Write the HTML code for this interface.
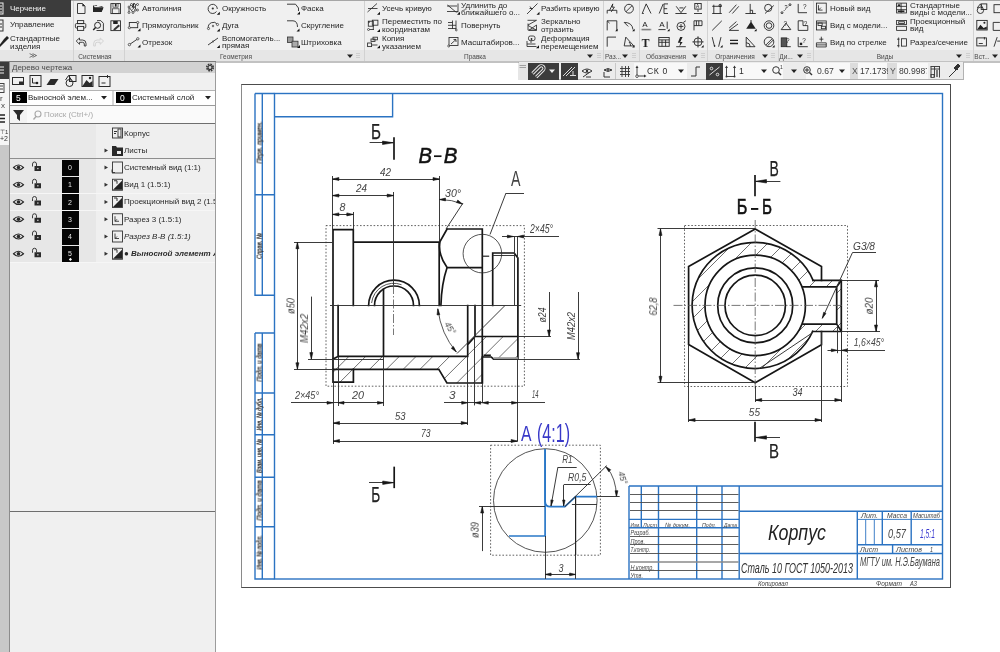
<!DOCTYPE html>
<html><head><meta charset="utf-8">
<style>
*{box-sizing:border-box}
html,body{margin:0;padding:0;width:1000px;height:652px;overflow:hidden;background:#fff;font-family:"Liberation Sans",sans-serif;color:#222}
.t,.lb,svg text{will-change:transform}
.a{position:absolute}
.t{position:absolute;white-space:nowrap;font-size:8px;line-height:8px;color:#262626}
.lb{position:absolute;white-space:nowrap;font-size:6.5px;line-height:7px;color:#4a4a4a}
svg{overflow:visible}
</style></head><body>
<!-- drawing area -->
<div class="a" style="left:216px;top:62px;width:784px;height:590px;background:#fff"></div>
<div class="a" style="left:240.5px;top:83.5px;width:710.5px;height:504.5px;border:1.3px solid #4c4c4c;border-left-color:#8a8a8a;background:#fff"></div>
<svg class="a" style="left:0;top:0" width="1000" height="652" viewBox="0 0 1000 652">
<g fill="none" stroke="#2b73c2" stroke-width="1.4">
<rect x="274.5" y="93.5" width="668" height="485.5"/>
<path d="M255 93.5V295.2H274.5M262.3 93.5V295.2M255 93.5H274.5M255 194.7H274.5"/>
<path d="M255 333V579H274.5M262.3 333V579M255 333H274.5M255 393H274.5M255 434.7H274.5M255 477.2H274.5M255 526.8H274.5"/>
<path d="M274.5 116.7H392.6V93.5"/>
</g>
<rect x="326" y="225.6" width="198.4" height="160.6" stroke="#3a3a3a" stroke-width="0.8" fill="none" stroke-dasharray="1.6 1.8"/>
<clipPath id="h1"><path d="M333 359.1L338.5 356.3H467.7V344.6L475 336.5H517.9V359.2H493.5L491.3 357H482.3V383H446.9L438.8 369.3H353.4V382.2H333Z"/></clipPath>
<path d="M281.7 390L371.7 300M298.5 390L388.5 300M315.3 390L405.3 300M332.1 390L422.1 300M348.9 390L438.9 300M365.7 390L455.7 300M382.5 390L472.5 300M399.3 390L489.3 300M416.1 390L506.1 300M432.9 390L522.9 300M449.7 390L539.7 300M466.5 390L556.5 300M483.3 390L573.3 300M500.1 390L590.1 300" stroke="#333" stroke-width="0.7" clip-path="url(#h1)"/>
<path d="M333 229.7H353.3V242.2H439.2V305.5 M353.3 229.7V305.5 M333 229.7V382.2H353.4V369.3H438.8L446.9 383H482.3V357H491.3L493.5 359.2H517.9V258L514.2 253H492.7V305.5" stroke="#161616" stroke-width="1.7" fill="none" stroke-linecap="square" />
<path d="M338.1 305.5V356.3H467.7V344.6L475 336.5H517.9 M333 359.1L338.5 356.3 M383.5 289.5V356.3 M467.7 305.5V356.3 M475 305.5V336.5 M333 369.3H353.4" stroke="#161616" stroke-width="1.7" fill="none" stroke-linecap="square" />
<path d="M447.1 229H482.3V383 M447.1 267.6H482.3 M447.1 229L440 241.5Q437.5 254 447.1 267.6 M447.1 267.6Q441.5 284 440.9 305.5" stroke="#161616" stroke-width="1.7" fill="none" stroke-linecap="square" />
<path d="M368.6 305.5A25.4 25.4 0 0 1 419.4 305.5 M374.5 305.5A19.5 19.5 0 0 1 413.5 305.5" stroke="#161616" stroke-width="1.7" fill="none" stroke-linecap="square" />
<path d="M371.6 303A22.2 22.2 0 0 1 401.5 284.7" stroke="#2a2a2a" stroke-width="0.8" fill="none" />
<line x1="330" y1="305.5" x2="521.2" y2="305.5" stroke="#303030" stroke-width="0.95" fill="none"/>
<line x1="294" y1="242.5" x2="333" y2="242.5" stroke="#303030" stroke-width="0.95" fill="none"/>
<line x1="308" y1="359.5" x2="383.5" y2="359.5" stroke="#303030" stroke-width="0.95" fill="none"/>
<line x1="457" y1="353.5" x2="505" y2="305.5" stroke="#303030" stroke-width="0.95" fill="none"/>
<line x1="294" y1="369.5" x2="333" y2="369.5" stroke="#303030" stroke-width="0.95" fill="none"/>
<line x1="439.5" y1="176" x2="439.5" y2="241.5" stroke="#303030" stroke-width="0.95" fill="none"/>
<line x1="332.5" y1="176" x2="332.5" y2="229.7" stroke="#303030" stroke-width="0.95" fill="none"/>
<line x1="393.5" y1="192" x2="393.5" y2="285" stroke="#303030" stroke-width="0.95" fill="none"/>
<line x1="353.5" y1="212" x2="353.5" y2="229.7" stroke="#303030" stroke-width="0.95" fill="none"/>
<line x1="393.5" y1="285" x2="393.5" y2="335" stroke="#555" stroke-width="0.8" fill="none" stroke-dasharray="9 2 1.5 2"/>
<line x1="492.7" y1="255.5" x2="514.2" y2="255.5" stroke="#303030" stroke-width="0.95" fill="none"/>
<line x1="514.5" y1="236" x2="514.5" y2="305.5" stroke="#303030" stroke-width="0.95" fill="none"/>
<line x1="517.5" y1="236" x2="517.5" y2="258" stroke="#303030" stroke-width="0.95" fill="none"/>
<rect x="493.5" y="357.2" width="24.4" height="2" fill="#999"/>
<line x1="484.5" y1="355.3" x2="490" y2="355.3" stroke="#161616" stroke-width="1.7" fill="none" stroke-linecap="square"/>
<line x1="482.3" y1="256.2" x2="489.2" y2="256.2" stroke="#222" stroke-width="1.2"/>
<line x1="332.4" y1="179.5" x2="439.5" y2="179.5" stroke="#303030" stroke-width="0.95" fill="none"/>
<polygon points="332.40,179.00 338.90,177.50 338.90,180.50" fill="#161616" stroke="#161616" stroke-width="0.6" stroke-linejoin="round"/>
<polygon points="439.50,179.00 433.00,180.50 433.00,177.50" fill="#161616" stroke="#161616" stroke-width="0.6" stroke-linejoin="round"/>
<text x="380" y="176" font-family="Liberation Sans" font-size="11.11" font-style="italic" font-weight="normal" fill="#444" textLength="11" lengthAdjust="spacingAndGlyphs">42</text>
<line x1="332.4" y1="195.5" x2="393.7" y2="195.5" stroke="#303030" stroke-width="0.95" fill="none"/>
<polygon points="332.40,195.60 338.90,194.10 338.90,197.10" fill="#161616" stroke="#161616" stroke-width="0.6" stroke-linejoin="round"/>
<polygon points="393.70,195.60 387.20,197.10 387.20,194.10" fill="#161616" stroke="#161616" stroke-width="0.6" stroke-linejoin="round"/>
<text x="356" y="192" font-family="Liberation Sans" font-size="11.11" font-style="italic" font-weight="normal" fill="#444" textLength="11" lengthAdjust="spacingAndGlyphs">24</text>
<line x1="332.4" y1="214.5" x2="353.3" y2="214.5" stroke="#303030" stroke-width="0.95" fill="none"/>
<polygon points="332.40,214.40 338.90,212.90 338.90,215.90" fill="#161616" stroke="#161616" stroke-width="0.6" stroke-linejoin="round"/>
<polygon points="353.30,214.40 346.80,215.90 346.80,212.90" fill="#161616" stroke="#161616" stroke-width="0.6" stroke-linejoin="round"/>
<text x="339.6" y="211" font-family="Liberation Sans" font-size="11.11" font-style="italic" font-weight="normal" fill="#444" textLength="5.899999999999977" lengthAdjust="spacingAndGlyphs">8</text>
<path d="M439.5 199.5Q452 199.5 462.5 204" stroke="#2a2a2a" stroke-width="0.8" fill="none" />
<polygon points="439.50,199.50 445.50,198.10 445.50,200.90" fill="#161616" stroke="#161616" stroke-width="0.6" stroke-linejoin="round"/>
<polygon points="462.50,204.00 456.51,202.57 457.76,200.06" fill="#161616" stroke="#161616" stroke-width="0.6" stroke-linejoin="round"/>
<line x1="446" y1="229" x2="463" y2="203" stroke="#303030" stroke-width="0.95" fill="none"/>
<text x="445" y="196.5" font-family="Liberation Sans" font-size="11.11" font-style="italic" font-weight="normal" fill="#444" textLength="16" lengthAdjust="spacingAndGlyphs">30°</text>
<line x1="490" y1="234.5" x2="506" y2="193" stroke="#303030" stroke-width="0.95" fill="none"/>
<line x1="506" y1="193.5" x2="524" y2="193.5" stroke="#303030" stroke-width="0.95" fill="none"/>
<text x="511" y="186" font-family="Liberation Sans" font-size="22.22" font-style="normal" font-weight="normal" fill="#444" textLength="9.5" lengthAdjust="spacingAndGlyphs">A</text>
<circle cx="482.4" cy="253.6" r="19.3" stroke="#2a2a2a" stroke-width="0.8" fill="none"/>
<line x1="502" y1="236.5" x2="559" y2="236.5" stroke="#303030" stroke-width="0.95" fill="none"/>
<polygon points="513.40,236.50 507.40,237.90 507.40,235.10" fill="#161616" stroke="#161616" stroke-width="0.6" stroke-linejoin="round"/>
<polygon points="517.60,236.50 523.60,235.10 523.60,237.90" fill="#161616" stroke="#161616" stroke-width="0.6" stroke-linejoin="round"/>
<text x="530" y="233" font-family="Liberation Sans" font-size="12.50" font-style="italic" font-weight="normal" fill="#444" textLength="23" lengthAdjust="spacingAndGlyphs">2×45°</text>
<line x1="297.5" y1="242.2" x2="297.5" y2="369.3" stroke="#303030" stroke-width="0.95" fill="none"/>
<polygon points="297.40,242.20 298.90,248.70 295.90,248.70" fill="#161616" stroke="#161616" stroke-width="0.6" stroke-linejoin="round"/>
<polygon points="297.40,369.30 295.90,362.80 298.90,362.80" fill="#161616" stroke="#161616" stroke-width="0.6" stroke-linejoin="round"/>
<g transform="translate(290.5 306) rotate(-90)"><text x="-8.0" y="3.75" font-family="Liberation Sans" font-size="10.42" font-style="italic" fill="#444" textLength="16" lengthAdjust="spacingAndGlyphs">ø50</text></g>
<line x1="311.5" y1="296.6" x2="311.5" y2="359.1" stroke="#303030" stroke-width="0.95" fill="none"/>
<polygon points="311.30,359.10 309.80,352.60 312.80,352.60" fill="#161616" stroke="#161616" stroke-width="0.6" stroke-linejoin="round"/>
<g transform="translate(304 328.5) rotate(-90)"><text x="-14.5" y="3.75" font-family="Liberation Sans" font-size="10.42" font-style="italic" fill="#444" textLength="29" lengthAdjust="spacingAndGlyphs">M42x2</text></g>
<path d="M437.8 308.8Q441 334 456.3 351.9" stroke="#2a2a2a" stroke-width="0.8" fill="none" />
<polygon points="437.80,308.80 439.79,314.63 437.00,314.91" fill="#161616" stroke="#161616" stroke-width="0.6" stroke-linejoin="round"/>
<polygon points="456.30,351.90 451.31,348.28 453.43,346.45" fill="#161616" stroke="#161616" stroke-width="0.6" stroke-linejoin="round"/>
<g transform="translate(451 327.5) rotate(60)"><text x="-6.5" y="3.5" font-family="Liberation Sans" font-size="9.72" font-style="italic" fill="#444" textLength="13" lengthAdjust="spacingAndGlyphs">45°</text></g>
<line x1="549.5" y1="292" x2="549.5" y2="336.5" stroke="#303030" stroke-width="0.95" fill="none"/>
<polygon points="549.00,336.50 547.50,330.00 550.50,330.00" fill="#161616" stroke="#161616" stroke-width="0.6" stroke-linejoin="round"/>
<line x1="517.9" y1="336.5" x2="551" y2="336.5" stroke="#303030" stroke-width="0.95" fill="none"/>
<g transform="translate(542 315) rotate(-90)"><text x="-7.5" y="3.75" font-family="Liberation Sans" font-size="10.42" font-style="italic" fill="#444" textLength="15" lengthAdjust="spacingAndGlyphs">ø24</text></g>
<line x1="578.5" y1="292" x2="578.5" y2="359.2" stroke="#303030" stroke-width="0.95" fill="none"/>
<polygon points="578.00,359.20 576.50,352.70 579.50,352.70" fill="#161616" stroke="#161616" stroke-width="0.6" stroke-linejoin="round"/>
<line x1="517.9" y1="359.5" x2="580" y2="359.5" stroke="#303030" stroke-width="0.95" fill="none"/>
<g transform="translate(571 326) rotate(-90)"><text x="-14.0" y="3.75" font-family="Liberation Sans" font-size="10.42" font-style="italic" fill="#444" textLength="28" lengthAdjust="spacingAndGlyphs">M42x2</text></g>
<line x1="333.5" y1="382.2" x2="333.5" y2="444" stroke="#303030" stroke-width="0.95" fill="none"/>
<line x1="338.5" y1="356.5" x2="338.5" y2="406" stroke="#303030" stroke-width="0.95" fill="none"/>
<line x1="383.5" y1="356.5" x2="383.5" y2="406" stroke="#303030" stroke-width="0.95" fill="none"/>
<line x1="467.5" y1="356.5" x2="467.5" y2="425" stroke="#303030" stroke-width="0.95" fill="none"/>
<line x1="474.5" y1="336.5" x2="474.5" y2="405.4" stroke="#303030" stroke-width="0.95" fill="none"/>
<line x1="482.5" y1="383" x2="482.5" y2="402" stroke="#303030" stroke-width="0.95" fill="none"/>
<line x1="517.5" y1="359.2" x2="517.5" y2="441" stroke="#303030" stroke-width="0.95" fill="none"/>
<line x1="291" y1="402.5" x2="383.5" y2="402.5" stroke="#303030" stroke-width="0.95" fill="none"/>
<line x1="444" y1="402.5" x2="545" y2="402.5" stroke="#303030" stroke-width="0.95" fill="none"/>
<polygon points="333.00,402.80 327.00,404.20 327.00,401.40" fill="#161616" stroke="#161616" stroke-width="0.6" stroke-linejoin="round"/>
<polygon points="338.00,402.80 344.00,401.40 344.00,404.20" fill="#161616" stroke="#161616" stroke-width="0.6" stroke-linejoin="round"/>
<polygon points="383.50,402.80 377.50,404.20 377.50,401.40" fill="#161616" stroke="#161616" stroke-width="0.6" stroke-linejoin="round"/>
<polygon points="467.70,402.80 461.70,404.20 461.70,401.40" fill="#161616" stroke="#161616" stroke-width="0.6" stroke-linejoin="round"/>
<polygon points="474.70,402.80 480.70,401.40 480.70,404.20" fill="#161616" stroke="#161616" stroke-width="0.6" stroke-linejoin="round"/>
<polygon points="482.30,402.80 488.30,401.40 488.30,404.20" fill="#161616" stroke="#161616" stroke-width="0.6" stroke-linejoin="round"/>
<polygon points="517.60,402.80 511.60,404.20 511.60,401.40" fill="#161616" stroke="#161616" stroke-width="0.6" stroke-linejoin="round"/>
<text x="295" y="399" font-family="Liberation Sans" font-size="11.11" font-style="italic" font-weight="normal" fill="#444" textLength="24" lengthAdjust="spacingAndGlyphs">2×45°</text>
<text x="352" y="399" font-family="Liberation Sans" font-size="11.11" font-style="italic" font-weight="normal" fill="#444" textLength="12" lengthAdjust="spacingAndGlyphs">20</text>
<text x="449" y="399" font-family="Liberation Sans" font-size="11.11" font-style="italic" font-weight="normal" fill="#444" textLength="6.5" lengthAdjust="spacingAndGlyphs">3</text>
<text x="532" y="398.3" font-family="Liberation Sans" font-size="10.83" font-style="italic" font-weight="normal" fill="#444" textLength="6.5" lengthAdjust="spacingAndGlyphs">14</text>
<line x1="333" y1="423.5" x2="467.7" y2="423.5" stroke="#303030" stroke-width="0.95" fill="none"/>
<polygon points="333.00,423.00 339.50,421.50 339.50,424.50" fill="#161616" stroke="#161616" stroke-width="0.6" stroke-linejoin="round"/>
<polygon points="467.70,423.00 461.20,424.50 461.20,421.50" fill="#161616" stroke="#161616" stroke-width="0.6" stroke-linejoin="round"/>
<text x="395" y="419.5" font-family="Liberation Sans" font-size="10.42" font-style="italic" font-weight="normal" fill="#444" textLength="10.5" lengthAdjust="spacingAndGlyphs">53</text>
<line x1="333" y1="441.5" x2="517.6" y2="441.5" stroke="#303030" stroke-width="0.95" fill="none"/>
<polygon points="333.00,441.00 339.50,439.50 339.50,442.50" fill="#161616" stroke="#161616" stroke-width="0.6" stroke-linejoin="round"/>
<polygon points="517.60,441.00 511.10,442.50 511.10,439.50" fill="#161616" stroke="#161616" stroke-width="0.6" stroke-linejoin="round"/>
<text x="421" y="436.8" font-family="Liberation Sans" font-size="10.28" font-style="italic" font-weight="normal" fill="#444" textLength="9.5" lengthAdjust="spacingAndGlyphs">73</text>
<text x="418.5" y="162.8" font-family="Liberation Sans" font-size="22.08" font-style="italic" font-weight="normal" fill="#111" stroke="#111" stroke-width="0.5" textLength="13.5" lengthAdjust="spacingAndGlyphs">В</text>
<path d="M434 156.2H441.5" stroke="#111" stroke-width="1.7"/>
<text x="443.8" y="162.8" font-family="Liberation Sans" font-size="22.08" font-style="italic" font-weight="normal" fill="#111" stroke="#111" stroke-width="0.5" textLength="13.699999999999989" lengthAdjust="spacingAndGlyphs">В</text>
<text x="371" y="138.5" font-family="Liberation Sans" font-size="22.92" font-style="normal" font-weight="normal" fill="#222" stroke="#222" stroke-width="0.25" textLength="10" lengthAdjust="spacingAndGlyphs">Б</text>
<line x1="394" y1="138" x2="394" y2="158.8" stroke="#161616" stroke-width="1.7" fill="none" stroke-linecap="square"/>
<line x1="369.6" y1="142.5" x2="394" y2="142.5" stroke="#303030" stroke-width="0.95" fill="none"/>
<polygon points="393.50,142.80 382.50,144.50 382.50,141.10" fill="#161616" stroke="#161616" stroke-width="0.6" stroke-linejoin="round"/>
<text x="371.2" y="502" font-family="Liberation Sans" font-size="22.92" font-style="normal" font-weight="normal" fill="#222" stroke="#222" stroke-width="0.25" textLength="9.0" lengthAdjust="spacingAndGlyphs">Б</text>
<line x1="394.2" y1="467.5" x2="394.2" y2="487.3" stroke="#161616" stroke-width="1.7" fill="none" stroke-linecap="square"/>
<line x1="369" y1="482.5" x2="394.2" y2="482.5" stroke="#303030" stroke-width="0.95" fill="none"/>
<polygon points="393.70,482.70 382.70,484.40 382.70,481.00" fill="#161616" stroke="#161616" stroke-width="0.6" stroke-linejoin="round"/>
<rect x="684.5" y="225.5" width="163" height="161" stroke="#3a3a3a" stroke-width="0.8" fill="none" stroke-dasharray="1.6 1.8"/>
<clipPath id="h2"><path clip-rule="nonzero" d="M692.10 305.40A63.1 63.1 0 1 1 818.30 305.40A63.1 63.1 0 1 1 692.10 305.40Z M705.00 305.40A50.2 50.2 0 1 0 805.40 305.40A50.2 50.2 0 1 0 705.00 305.40Z M812 280.3H841.3V331.5H812Z"/></clipPath>
<clipPath id="h3"><path clip-rule="nonzero" d="M600 150H900V450H600Z M803 286.9V324.1H836.7V286.9Z"/></clipPath>
<g clip-path="url(#h3)"><g clip-path="url(#h2)"><path d="M407.0 400L597.0 210M424.0 400L614.0 210M441.0 400L631.0 210M458.0 400L648.0 210M475.0 400L665.0 210M492.0 400L682.0 210M509.0 400L699.0 210M526.0 400L716.0 210M543.0 400L733.0 210M560.0 400L750.0 210M577.0 400L767.0 210M594.0 400L784.0 210M611.0 400L801.0 210M628.0 400L818.0 210M645.0 400L835.0 210M662.0 400L852.0 210M679.0 400L869.0 210M696.0 400L886.0 210M713.0 400L903.0 210M730.0 400L920.0 210M747.0 400L937.0 210M764.0 400L954.0 210" stroke="#333" stroke-width="0.7"/></g></g>
<circle cx="755.2" cy="305.4" r="30.2" stroke="#161616" stroke-width="1.7" fill="none" stroke-linecap="square"/>
<circle cx="755.2" cy="305.4" r="37.5" stroke="#161616" stroke-width="1.7" fill="none" stroke-linecap="square"/>
<circle cx="755.2" cy="305.4" r="50.2" stroke="#161616" stroke-width="1.7" fill="none" stroke-linecap="square"/>
<path d="M813.09 280.3A63.1 63.1 0 1 0 812.65 331.5" stroke="#161616" stroke-width="1.7" fill="none" stroke-linecap="square" />
<path d="M821.5 280.3V266.6L755.2 228.9L688.6 266.6V344.6L755.2 382.8L821.5 344.8V331.5" stroke="#161616" stroke-width="1.7" fill="none" stroke-linecap="square" />
<path d="M813.09 280.3H841.3V331.5H812.65" stroke="#161616" stroke-width="1.7" fill="none" stroke-linecap="square" />
<path d="M803 286.9H836.7V324.1H803 M836.7 286.9L841.3 280.6 M836.7 324.1L841.3 331.2 M836.7 286.9V324.1" stroke="#161616" stroke-width="1.7" fill="none" stroke-linecap="square" />
<line x1="673.5" y1="305.4" x2="844" y2="305.4" stroke="#555" stroke-width="0.8" fill="none" stroke-dasharray="9 2 1.5 2"/>
<line x1="755.2" y1="220" x2="755.2" y2="390" stroke="#555" stroke-width="0.8" fill="none" stroke-dasharray="9 2 1.5 2"/>
<line x1="657.5" y1="228.5" x2="755.2" y2="228.5" stroke="#303030" stroke-width="0.95" fill="none"/>
<line x1="657.5" y1="382.5" x2="755.2" y2="382.5" stroke="#303030" stroke-width="0.95" fill="none"/>
<line x1="660.5" y1="228.9" x2="660.5" y2="382.8" stroke="#303030" stroke-width="0.95" fill="none"/>
<polygon points="660.50,228.90 662.00,235.40 659.00,235.40" fill="#161616" stroke="#161616" stroke-width="0.6" stroke-linejoin="round"/>
<polygon points="660.50,382.80 659.00,376.30 662.00,376.30" fill="#161616" stroke="#161616" stroke-width="0.6" stroke-linejoin="round"/>
<g transform="translate(653 306.5) rotate(-90)"><text x="-9.0" y="3.75" font-family="Liberation Sans" font-size="10.42" font-style="italic" fill="#444" textLength="18" lengthAdjust="spacingAndGlyphs">62,8</text></g>
<line x1="688.5" y1="344.6" x2="688.5" y2="422" stroke="#303030" stroke-width="0.95" fill="none"/>
<line x1="821.5" y1="331.5" x2="821.5" y2="422" stroke="#303030" stroke-width="0.95" fill="none"/>
<line x1="841.5" y1="331.5" x2="841.5" y2="402" stroke="#303030" stroke-width="0.95" fill="none"/>
<line x1="755.5" y1="386" x2="755.5" y2="402" stroke="#303030" stroke-width="0.95" fill="none"/>
<line x1="755.2" y1="400.5" x2="841.3" y2="400.5" stroke="#303030" stroke-width="0.95" fill="none"/>
<polygon points="755.20,400.00 761.70,398.50 761.70,401.50" fill="#161616" stroke="#161616" stroke-width="0.6" stroke-linejoin="round"/>
<polygon points="841.30,400.00 834.80,401.50 834.80,398.50" fill="#161616" stroke="#161616" stroke-width="0.6" stroke-linejoin="round"/>
<text x="792.5" y="396" font-family="Liberation Sans" font-size="10.00" font-style="italic" font-weight="normal" fill="#444" textLength="10.0" lengthAdjust="spacingAndGlyphs">34</text>
<line x1="688.6" y1="420.5" x2="821.5" y2="420.5" stroke="#303030" stroke-width="0.95" fill="none"/>
<polygon points="688.60,420.00 695.10,418.50 695.10,421.50" fill="#161616" stroke="#161616" stroke-width="0.6" stroke-linejoin="round"/>
<polygon points="821.50,420.00 815.00,421.50 815.00,418.50" fill="#161616" stroke="#161616" stroke-width="0.6" stroke-linejoin="round"/>
<text x="748.8" y="416" font-family="Liberation Sans" font-size="11.81" font-style="italic" font-weight="normal" fill="#444" textLength="11.200000000000045" lengthAdjust="spacingAndGlyphs">55</text>
<line x1="841.3" y1="280.5" x2="879" y2="280.5" stroke="#303030" stroke-width="0.95" fill="none"/>
<line x1="841.3" y1="331.5" x2="880" y2="331.5" stroke="#303030" stroke-width="0.95" fill="none"/>
<line x1="876.5" y1="280.3" x2="876.5" y2="331.5" stroke="#303030" stroke-width="0.95" fill="none"/>
<polygon points="876.00,280.30 877.50,286.80 874.50,286.80" fill="#161616" stroke="#161616" stroke-width="0.6" stroke-linejoin="round"/>
<polygon points="876.00,331.50 874.50,325.00 877.50,325.00" fill="#161616" stroke="#161616" stroke-width="0.6" stroke-linejoin="round"/>
<g transform="translate(868.8 306) rotate(-90)"><text x="-8.5" y="3.75" font-family="Liberation Sans" font-size="10.42" font-style="italic" fill="#444" textLength="17" lengthAdjust="spacingAndGlyphs">ø20</text></g>
<line x1="837.5" y1="325" x2="837.5" y2="353.2" stroke="#303030" stroke-width="0.95" fill="none"/>
<line x1="841.5" y1="331.5" x2="841.5" y2="353" stroke="#303030" stroke-width="0.95" fill="none"/>
<line x1="827.5" y1="350.5" x2="885" y2="350.5" stroke="#303030" stroke-width="0.95" fill="none"/>
<polygon points="837.30,350.30 831.30,351.70 831.30,348.90" fill="#161616" stroke="#161616" stroke-width="0.6" stroke-linejoin="round"/>
<polygon points="841.30,350.30 847.30,348.90 847.30,351.70" fill="#161616" stroke="#161616" stroke-width="0.6" stroke-linejoin="round"/>
<text x="853.8" y="346.3" font-family="Liberation Sans" font-size="10.42" font-style="italic" font-weight="normal" fill="#444" textLength="30.200000000000045" lengthAdjust="spacingAndGlyphs">1,6×45°</text>
<line x1="852.5" y1="252.5" x2="876" y2="252.5" stroke="#303030" stroke-width="0.95" fill="none"/>
<line x1="852.5" y1="252.5" x2="822.3" y2="318.3" stroke="#303030" stroke-width="0.95" fill="none"/>
<polygon points="822.30,318.30 823.63,312.31 825.99,313.40" fill="#161616" stroke="#161616" stroke-width="0.6" stroke-linejoin="round"/>
<text x="853" y="249.5" font-family="Liberation Sans" font-size="11.81" font-style="italic" font-weight="normal" fill="#444" textLength="22" lengthAdjust="spacingAndGlyphs">G3/8</text>
<line x1="759.3" y1="368.5" x2="812.8" y2="332.5" stroke="#303030" stroke-width="0.95" fill="none"/>
<text x="736.8" y="214.4" font-family="Liberation Sans" font-size="22.08" font-style="normal" font-weight="normal" fill="#111" stroke="#111" stroke-width="0.6" textLength="10.600000000000023" lengthAdjust="spacingAndGlyphs">Б</text>
<rect x="751" y="208" width="7.3" height="1.9" fill="#111"/>
<text x="762" y="214.4" font-family="Liberation Sans" font-size="22.08" font-style="normal" font-weight="normal" fill="#111" stroke="#111" stroke-width="0.6" textLength="10" lengthAdjust="spacingAndGlyphs">Б</text>
<text x="769.5" y="176.4" font-family="Liberation Sans" font-size="22.22" font-style="normal" font-weight="normal" fill="#222" stroke="#222" stroke-width="0.25" textLength="9.299999999999955" lengthAdjust="spacingAndGlyphs">В</text>
<line x1="755" y1="175.8" x2="755" y2="195.4" stroke="#161616" stroke-width="1.7" fill="none" stroke-linecap="square"/>
<line x1="755" y1="181.5" x2="780.4" y2="181.5" stroke="#303030" stroke-width="0.95" fill="none"/>
<polygon points="755.50,181.30 766.50,179.60 766.50,183.00" fill="#161616" stroke="#161616" stroke-width="0.6" stroke-linejoin="round"/>
<text x="769" y="458" font-family="Liberation Sans" font-size="20.83" font-style="normal" font-weight="normal" fill="#222" stroke="#222" stroke-width="0.25" textLength="10" lengthAdjust="spacingAndGlyphs">В</text>
<line x1="755" y1="422.5" x2="755" y2="441" stroke="#161616" stroke-width="1.7" fill="none" stroke-linecap="square"/>
<line x1="755" y1="437.5" x2="780" y2="437.5" stroke="#303030" stroke-width="0.95" fill="none"/>
<polygon points="755.50,437.50 766.50,435.80 766.50,439.20" fill="#161616" stroke="#161616" stroke-width="0.6" stroke-linejoin="round"/>
<rect x="490.6" y="445.2" width="109.8" height="110" stroke="#3a3a3a" stroke-width="0.8" fill="none" stroke-dasharray="1.6 1.8"/>
<circle cx="545.3" cy="500.5" r="51.8" stroke="#2a2a2a" stroke-width="0.8" fill="none"/>
<path d="M545.1 448.9V501.6Q545.5 506.7 549.9 506.7H564.9L575.6 496.7H597.1" stroke="#2a78c8" fill="none" stroke-width="1.7"/>
<path d="M509 536H545.1V448.9" stroke="#2a78c8" fill="none" stroke-width="1.7"/>
<line x1="545.5" y1="536" x2="545.5" y2="578.9" stroke="#303030" stroke-width="0.95" fill="none"/>
<line x1="575.5" y1="496.7" x2="575.5" y2="578.9" stroke="#303030" stroke-width="0.95" fill="none"/>
<line x1="575.6" y1="496.7" x2="575.6" y2="555" stroke="#222" stroke-width="1.2"/>
<line x1="571.9" y1="504.5" x2="597" y2="504.5" stroke="#303030" stroke-width="0.95" fill="none"/>
<line x1="479" y1="506.5" x2="545" y2="506.5" stroke="#303030" stroke-width="0.95" fill="none"/>
<line x1="482.5" y1="506.5" x2="482.5" y2="551.1" stroke="#303030" stroke-width="0.95" fill="none"/>
<polygon points="482.20,506.50 483.70,513.00 480.70,513.00" fill="#161616" stroke="#161616" stroke-width="0.6" stroke-linejoin="round"/>
<g transform="translate(474.6 530) rotate(-90)"><text x="-8.0" y="3.75" font-family="Liberation Sans" font-size="10.42" font-style="italic" fill="#444" textLength="16" lengthAdjust="spacingAndGlyphs">ø39</text></g>
<line x1="545.1" y1="574.5" x2="575.6" y2="574.5" stroke="#303030" stroke-width="0.95" fill="none"/>
<polygon points="545.10,574.40 551.10,573.00 551.10,575.80" fill="#161616" stroke="#161616" stroke-width="0.6" stroke-linejoin="round"/>
<polygon points="575.60,574.40 569.60,575.80 569.60,573.00" fill="#161616" stroke="#161616" stroke-width="0.6" stroke-linejoin="round"/>
<text x="558.5" y="571.5" font-family="Liberation Sans" font-size="10.42" font-style="italic" font-weight="normal" fill="#444" textLength="5.0" lengthAdjust="spacingAndGlyphs">3</text>
<line x1="557.9" y1="467.5" x2="576.7" y2="467.5" stroke="#303030" stroke-width="0.95" fill="none"/>
<line x1="557.9" y1="467.2" x2="551" y2="506" stroke="#303030" stroke-width="0.95" fill="none"/>
<polygon points="551.00,506.00 550.88,499.88 553.24,500.31" fill="#161616" stroke="#161616" stroke-width="0.6" stroke-linejoin="round"/>
<text x="562.2" y="463.4" font-family="Liberation Sans" font-size="11.11" font-style="italic" font-weight="normal" fill="#444" textLength="10.199999999999932" lengthAdjust="spacingAndGlyphs">R1</text>
<line x1="563.8" y1="484.5" x2="590.7" y2="484.5" stroke="#303030" stroke-width="0.95" fill="none"/>
<line x1="563.5" y1="484.9" x2="563.5" y2="506" stroke="#303030" stroke-width="0.95" fill="none"/>
<polygon points="563.80,506.00 562.60,500.00 565.00,500.00" fill="#161616" stroke="#161616" stroke-width="0.6" stroke-linejoin="round"/>
<text x="568.1" y="481.1" font-family="Liberation Sans" font-size="11.11" font-style="italic" font-weight="normal" fill="#444" textLength="18.299999999999955" lengthAdjust="spacingAndGlyphs">R0,5</text>
<line x1="564.9" y1="506.7" x2="606.8" y2="465.6" stroke="#303030" stroke-width="0.95" fill="none"/>
<path d="M606.8 467.5Q616 478 616.5 496.7" stroke="#2a2a2a" stroke-width="0.8" fill="none" />
<polygon points="605.50,466.50 610.73,469.75 608.75,471.73" fill="#161616" stroke="#161616" stroke-width="0.6" stroke-linejoin="round"/>
<polygon points="616.50,496.70 615.10,490.70 617.90,490.70" fill="#161616" stroke="#161616" stroke-width="0.6" stroke-linejoin="round"/>
<line x1="597" y1="496.5" x2="619.7" y2="496.5" stroke="#303030" stroke-width="0.95" fill="none"/>
<g transform="translate(622.8 477.8) rotate(75)"><text x="-6.5" y="3.25" font-family="Liberation Sans" font-size="9.03" font-style="italic" fill="#444" textLength="13" lengthAdjust="spacingAndGlyphs">45°</text></g>
<text x="521" y="440.5" font-family="Liberation Sans" font-size="22.22" font-style="normal" font-weight="normal" fill="#3838c8" textLength="10.5" lengthAdjust="spacingAndGlyphs">A</text>
<text x="537" y="441.5" font-family="Liberation Sans" font-size="25.00" font-style="normal" font-weight="normal" fill="#3838c8" textLength="33" lengthAdjust="spacingAndGlyphs">(4:1)</text>
<path d="M629 486V579 M629 486H942.4 M641.3 486V527.8 M658.5 486V579 M696.7 486V579 M722 486V579 M739.2 486V579 M629 519.4H739.2 M629 527.8H739.2 M739.2 511.2H942.4 M739.2 553.5H942.4 M857.3 511.2V579 M882.3 511.2V544.8 M911.2 511.2V544.8 M857.3 544.8H942.4 M892.6 544.8V553.5" stroke="#2b73c2" fill="none" stroke-width="1.4"/>
<path d="M630 494.5H738.5 M630 502.5H738.5 M630 510.5H738.5 M630 536.5H738.5 M630 544.5H738.5 M630 553.5H738.5 M630 570.5H738.5" stroke="#4a4a4a" stroke-width="0.9" fill="none"/>
<path d="M630 562H738.5" stroke="#8a8a8a" stroke-width="1.4" fill="none"/>
<path d="M857.3 519.4H942.4 M865.7 519.4V544.8 M874.3 519.4V544.8" stroke="#2b73c2" fill="none" stroke-width="0.9"/>
<g transform="translate(258.6 142.5) rotate(-90)"><text x="-21.0" y="2.65" font-family="Liberation Sans" font-size="7.36" font-style="italic" fill="#2a2a2a" stroke="#2a2a2a" stroke-width="0.25" textLength="42" lengthAdjust="spacingAndGlyphs">Перв. примен.</text></g>
<g transform="translate(258.6 246) rotate(-90)"><text x="-13.0" y="2.65" font-family="Liberation Sans" font-size="7.36" font-style="italic" fill="#2a2a2a" stroke="#2a2a2a" stroke-width="0.25" textLength="26" lengthAdjust="spacingAndGlyphs">Справ. №</text></g>
<g transform="translate(258.6 362.6) rotate(-90)"><text x="-19.0" y="2.65" font-family="Liberation Sans" font-size="7.36" font-style="italic" fill="#2a2a2a" stroke="#2a2a2a" stroke-width="0.25" textLength="38" lengthAdjust="spacingAndGlyphs">Подп. и дата</text></g>
<g transform="translate(258.6 414) rotate(-90)"><text x="-16.5" y="2.65" font-family="Liberation Sans" font-size="7.36" font-style="italic" fill="#2a2a2a" stroke="#2a2a2a" stroke-width="0.25" textLength="33" lengthAdjust="spacingAndGlyphs">Инв. № дубл.</text></g>
<g transform="translate(258.6 456) rotate(-90)"><text x="-17.0" y="2.65" font-family="Liberation Sans" font-size="7.36" font-style="italic" fill="#2a2a2a" stroke="#2a2a2a" stroke-width="0.25" textLength="34" lengthAdjust="spacingAndGlyphs">Взам. инв. №</text></g>
<g transform="translate(258.6 500.5) rotate(-90)"><text x="-20.0" y="2.65" font-family="Liberation Sans" font-size="7.36" font-style="italic" fill="#2a2a2a" stroke="#2a2a2a" stroke-width="0.25" textLength="40" lengthAdjust="spacingAndGlyphs">Подп. и дата</text></g>
<g transform="translate(258.6 552.5) rotate(-90)"><text x="-17.0" y="2.65" font-family="Liberation Sans" font-size="7.36" font-style="italic" fill="#2a2a2a" stroke="#2a2a2a" stroke-width="0.25" textLength="34" lengthAdjust="spacingAndGlyphs">Инв. № подл.</text></g>
<text x="630.5" y="526.5" font-family="Liberation Sans" font-size="6.25" font-style="italic" font-weight="normal" fill="#444" textLength="10.0" lengthAdjust="spacingAndGlyphs">Изм.</text>
<text x="643" y="526.5" font-family="Liberation Sans" font-size="6.25" font-style="italic" font-weight="normal" fill="#444" textLength="14" lengthAdjust="spacingAndGlyphs">Лист</text>
<text x="665" y="526.5" font-family="Liberation Sans" font-size="6.25" font-style="italic" font-weight="normal" fill="#444" textLength="25" lengthAdjust="spacingAndGlyphs">№ докум.</text>
<text x="702" y="526.5" font-family="Liberation Sans" font-size="6.25" font-style="italic" font-weight="normal" fill="#444" textLength="14" lengthAdjust="spacingAndGlyphs">Подп.</text>
<text x="724" y="526.5" font-family="Liberation Sans" font-size="6.25" font-style="italic" font-weight="normal" fill="#444" textLength="13" lengthAdjust="spacingAndGlyphs">Дата</text>
<text x="630.5" y="535.2" font-family="Liberation Sans" font-size="6.53" font-style="italic" font-weight="normal" fill="#444" textLength="19.5" lengthAdjust="spacingAndGlyphs">Разраб.</text>
<text x="630.5" y="543.7" font-family="Liberation Sans" font-size="6.53" font-style="italic" font-weight="normal" fill="#444" textLength="14.5" lengthAdjust="spacingAndGlyphs">Пров.</text>
<text x="630.5" y="552.2" font-family="Liberation Sans" font-size="6.53" font-style="italic" font-weight="normal" fill="#444" textLength="19.5" lengthAdjust="spacingAndGlyphs">Т.контр.</text>
<text x="630.5" y="569.6" font-family="Liberation Sans" font-size="6.39" font-style="italic" font-weight="normal" fill="#444" textLength="23.5" lengthAdjust="spacingAndGlyphs">Н.контр.</text>
<text x="630.5" y="577.6" font-family="Liberation Sans" font-size="6.39" font-style="italic" font-weight="normal" fill="#444" textLength="12.5" lengthAdjust="spacingAndGlyphs">Утв.</text>
<text x="768" y="540" font-family="Liberation Sans" font-size="21.53" font-style="italic" font-weight="normal" fill="#222" textLength="58" lengthAdjust="spacingAndGlyphs">Корпус</text>
<text x="741" y="572.5" font-family="Liberation Sans" font-size="14.58" font-style="italic" font-weight="normal" fill="#333" textLength="112" lengthAdjust="spacingAndGlyphs">Сталь 10  ГОСТ 1050-2013</text>
<text x="861" y="518.2" font-family="Liberation Sans" font-size="6.53" font-style="italic" font-weight="normal" fill="#444" textLength="17" lengthAdjust="spacingAndGlyphs">Лит.</text>
<text x="887" y="518.2" font-family="Liberation Sans" font-size="6.53" font-style="italic" font-weight="normal" fill="#444" textLength="20" lengthAdjust="spacingAndGlyphs">Масса</text>
<text x="913" y="518.2" font-family="Liberation Sans" font-size="6.53" font-style="italic" font-weight="normal" fill="#444" textLength="27" lengthAdjust="spacingAndGlyphs">Масштаб</text>
<text x="888" y="538.2" font-family="Liberation Sans" font-size="12.08" font-style="italic" font-weight="normal" fill="#444" textLength="18" lengthAdjust="spacingAndGlyphs">0,57</text>
<text x="920" y="538.2" font-family="Liberation Sans" font-size="12.08" font-style="italic" font-weight="normal" fill="#3b3bd0" textLength="15" lengthAdjust="spacingAndGlyphs">1,5:1</text>
<text x="860" y="552.2" font-family="Liberation Sans" font-size="6.53" font-style="italic" font-weight="normal" fill="#444" textLength="18" lengthAdjust="spacingAndGlyphs">Лист</text>
<text x="896" y="552.2" font-family="Liberation Sans" font-size="6.53" font-style="italic" font-weight="normal" fill="#444" textLength="26" lengthAdjust="spacingAndGlyphs">Листов</text>
<text x="930" y="552.2" font-family="Liberation Sans" font-size="6.53" font-style="italic" font-weight="normal" fill="#444" textLength="3" lengthAdjust="spacingAndGlyphs">1</text>
<text x="860" y="565.5" font-family="Liberation Sans" font-size="13.19" font-style="italic" font-weight="normal" fill="#444" textLength="80" lengthAdjust="spacingAndGlyphs">МГТУ им. Н.Э.Баумана</text>
<text x="758" y="585.6" font-family="Liberation Sans" font-size="7.08" font-style="italic" font-weight="normal" fill="#444" textLength="30" lengthAdjust="spacingAndGlyphs">Копировал</text>
<text x="876" y="585.6" font-family="Liberation Sans" font-size="7.08" font-style="italic" font-weight="normal" fill="#444" textLength="26" lengthAdjust="spacingAndGlyphs">Формат</text>
<text x="910" y="585.6" font-family="Liberation Sans" font-size="7.08" font-style="italic" font-weight="normal" fill="#444" textLength="7" lengthAdjust="spacingAndGlyphs">А3</text>
</svg>
<div class="a" style="left:0;top:0;width:1000px;height:62px;background:#f0f0f0;border-top:1px solid #a6a6a6"></div>
<div class="a" style="left:0px;top:50px;width:1000px;height:11px;background:#e6e6e6"></div>
<div class="a" style="left:0;top:61px;width:216px;height:1.6px;background:#7a7a7a"></div>
<div class="a" style="left:216px;top:61px;width:784px;height:1.6px;background:#c2c2c2"></div>
<div class="a" style="left:72.6px;top:1px;width:1px;height:60px;background:#d2d2d2"></div>
<div class="a" style="left:124.4px;top:1px;width:1px;height:60px;background:#d2d2d2"></div>
<div class="a" style="left:363.7px;top:1px;width:1px;height:60px;background:#d2d2d2"></div>
<div class="a" style="left:603px;top:1px;width:1px;height:60px;background:#d2d2d2"></div>
<div class="a" style="left:639px;top:1px;width:1px;height:60px;background:#d2d2d2"></div>
<div class="a" style="left:707px;top:1px;width:1px;height:60px;background:#d2d2d2"></div>
<div class="a" style="left:777.6px;top:1px;width:1px;height:60px;background:#d2d2d2"></div>
<div class="a" style="left:812.8px;top:1px;width:1px;height:60px;background:#d2d2d2"></div>
<div class="a" style="left:972.5px;top:1px;width:1px;height:60px;background:#d2d2d2"></div>
<div class="a" style="left:0;top:0;width:71px;height:17px;background:#3c3c3c"></div>
<div class="t" style="left:10px;top:4.5px;font-size:8px;line-height:8px;color:#f4f4f4;">Черчение</div>
<div class="t" style="left:10px;top:21px;font-size:8px;line-height:8px;color:#262626;">Управление</div>
<div class="t" style="left:10px;top:34.8px;font-size:8px;line-height:8px;color:#262626;line-height:7.5px">Стандартные<br>изделия</div>
<div class="t" style="left:29px;top:52px;font-size:8px;color:#555">&#8811;</div>
<div class="lb" style="left:55px;top:52.5px;width:80px;text-align:center">Системная</div>
<div class="lb" style="left:196px;top:52.5px;width:80px;text-align:center">Геометрия</div>
<div class="lb" style="left:435px;top:52.5px;width:80px;text-align:center">Правка</div>
<div class="lb" style="left:573px;top:52.5px;width:80px;text-align:center">Раз...</div>
<div class="lb" style="left:626px;top:52.5px;width:80px;text-align:center">Обозначения</div>
<div class="lb" style="left:695px;top:52.5px;width:80px;text-align:center">Ограничения</div>
<div class="lb" style="left:746px;top:52.5px;width:80px;text-align:center">Ди...</div>
<div class="lb" style="left:845px;top:52.5px;width:80px;text-align:center">Виды</div>
<div class="lb" style="left:942px;top:52.5px;width:80px;text-align:center">Вст...</div>
<div class="t" style="left:142px;top:4.5px;font-size:8px;line-height:8px;color:#262626;">Автолиния</div>
<div class="t" style="left:142px;top:21.5px;font-size:8px;line-height:8px;color:#262626;">Прямоугольник</div>
<div class="t" style="left:142px;top:38.5px;font-size:8px;line-height:8px;color:#262626;">Отрезок</div>
<div class="t" style="left:222px;top:4.5px;font-size:8px;line-height:8px;color:#262626;">Окружность</div>
<div class="t" style="left:222px;top:21.5px;font-size:8px;line-height:8px;color:#262626;">Дуга</div>
<div class="t" style="left:222px;top:35px;font-size:8px;line-height:8px;color:#262626;line-height:7.3px">Вспомогатель...<br>прямая</div>
<div class="t" style="left:301px;top:4.5px;font-size:8px;line-height:8px;color:#262626;">Фаска</div>
<div class="t" style="left:301px;top:21.5px;font-size:8px;line-height:8px;color:#262626;">Скругление</div>
<div class="t" style="left:301px;top:38.5px;font-size:8px;line-height:8px;color:#262626;">Штриховка</div>
<div class="t" style="left:381.5px;top:4.5px;font-size:8px;line-height:8px;color:#262626;">Усечь кривую</div>
<div class="t" style="left:381.5px;top:17.5px;font-size:8px;line-height:8px;color:#262626;line-height:8px">Переместить по<br>координатам</div>
<div class="t" style="left:381.5px;top:34.8px;font-size:8px;line-height:8px;color:#262626;line-height:7.7px">Копия<br>указанием</div>
<div class="t" style="left:460.8px;top:1.5px;font-size:8px;line-height:8px;color:#262626;line-height:7.4px">Удлинить до<br>ближайшего о...</div>
<div class="t" style="left:460.8px;top:21.5px;font-size:8px;line-height:8px;color:#262626;">Повернуть</div>
<div class="t" style="left:460.8px;top:38.5px;font-size:8px;line-height:8px;color:#262626;">Масштабиров...</div>
<div class="t" style="left:541px;top:4.5px;font-size:8px;line-height:8px;color:#262626;">Разбить кривую</div>
<div class="t" style="left:541px;top:17.5px;font-size:8px;line-height:8px;color:#262626;line-height:7.7px">Зеркально<br>отразить</div>
<div class="t" style="left:541px;top:34.8px;font-size:8px;line-height:8px;color:#262626;line-height:7.7px">Деформация<br>перемещением</div>
<div class="t" style="left:830.4px;top:4.5px;font-size:8px;line-height:8px;color:#262626;">Новый вид</div>
<div class="t" style="left:830.4px;top:21.5px;font-size:8px;line-height:8px;color:#262626;">Вид с модели...</div>
<div class="t" style="left:830.4px;top:38.5px;font-size:8px;line-height:8px;color:#262626;">Вид по стрелке</div>
<div class="t" style="left:910px;top:1.5px;font-size:8px;line-height:8px;color:#262626;line-height:7.4px">Стандартные<br>виды с модели...</div>
<div class="t" style="left:910px;top:17.5px;font-size:8px;line-height:8px;color:#262626;line-height:7.4px">Проекционный<br>вид</div>
<div class="t" style="left:910px;top:38.5px;font-size:8px;line-height:8px;color:#262626;">Разрез/сечение</div>
<svg class="a" style="left:0;top:0" width="1000" height="62" viewBox="0 0 1000 62"><g transform="translate(0 2) scale(1)"><rect x="-3" y="1" width="6" height="11" fill="none" stroke="#eee" stroke-width="1"/><path d="M-1 4H2M-1 7H2M-1 10H2" stroke="#eee"/></g><g transform="translate(0 19) scale(1)"><rect x="-3" y="1" width="6" height="11" fill="none" stroke="#333"/><path d="M-1 5H2M-1 8H2" stroke="#333"/></g><g transform="translate(0 35) scale(1)"><path d="M-2 12L4 4L7 1L9 3L6 6L-1 13Z" fill="#222"/></g><path d="M347 54.5H353L350 58Z" fill="#222"/><path d="M587 54.5H593L590 58Z" fill="#222"/><path d="M622 54.5H628L625 58Z" fill="#222"/><path d="M692 54.5H698L695 58Z" fill="#222"/><path d="M762 54.5H768L765 58Z" fill="#222"/><path d="M797 54.5H803L800 58Z" fill="#222"/><path d="M956 54.5H962L959 58Z" fill="#222"/><path d="M992 54.5H998L995 58Z" fill="#222"/><path d="M357 53V59M359 53V59" stroke="#aaa" stroke-width="0.8" stroke-dasharray="1 1"/><path d="M598 53V59M600 53V59" stroke="#aaa" stroke-width="0.8" stroke-dasharray="1 1"/><path d="M633 53V59M635 53V59" stroke="#aaa" stroke-width="0.8" stroke-dasharray="1 1"/><path d="M702 53V59M704 53V59" stroke="#aaa" stroke-width="0.8" stroke-dasharray="1 1"/><path d="M772 53V59M774 53V59" stroke="#aaa" stroke-width="0.8" stroke-dasharray="1 1"/><path d="M808 53V59M810 53V59" stroke="#aaa" stroke-width="0.8" stroke-dasharray="1 1"/><path d="M967 53V59M969 53V59" stroke="#aaa" stroke-width="0.8" stroke-dasharray="1 1"/><path d="M77.5 3.5H82.5L85 6V13.5H77.5Z" stroke="#2a2a2a" fill="none" stroke-width="0.9"/><path d="M82.3 3.5V6.2H85Z" fill="#222"/><path d="M93 5H96.5L97.5 6.3H102.5V7.5H95L93 12H101.5L103.5 7.5" fill="#262626"/><path d="M93 5V12H101.5L103.5 7.5H95Z" fill="#262626"/><rect x="110.9" y="3.6" width="9.6" height="10" stroke="#2a2a2a" fill="none" stroke-width="0.9"/><rect x="113" y="3.6" width="5" height="3.6" fill="#fff" stroke="#2a2a2a" stroke-width="0.7"/><rect x="114.8" y="4" width="1.8" height="2.6" fill="#222"/><rect x="112.6" y="8.8" width="6.4" height="4.8" fill="none" stroke="#2a2a2a" stroke-width="0.7"/><rect x="77.5" y="20.6" width="6.2" height="3" stroke="#2a2a2a" fill="none" stroke-width="0.9"/><rect x="75.4" y="23.6" width="10.4" height="4.4" rx="1" stroke="#2a2a2a" fill="none" stroke-width="0.9"/><rect x="77.5" y="26.4" width="6.2" height="4" stroke="#2a2a2a" fill="#f0f0f0" stroke-width="0.9"/><path d="M97 20.6H100.8L103.4 23.3V30.5H96.5" stroke="#2a2a2a" fill="none" stroke-width="0.9"/><circle cx="97.6" cy="25.3" r="3" stroke="#2a2a2a" fill="none" stroke-width="1"/><path d="M95.6 27.5L93.2 30" stroke="#222" stroke-width="1.4"/><rect x="110.9" y="20.8" width="9.6" height="9.8" stroke="#2a2a2a" fill="none" stroke-width="0.9"/><rect x="113.2" y="21" width="4.5" height="3" fill="#222"/><path d="M113 29.5L118.5 24.5L120 26L115 30.3Z" fill="#333"/><path d="M76.2 41L79.5 38V40H82.5Q86 40 86 43.5V46H84.3V44Q84.3 42.3 82.5 42.3H79.5V44.3Z" fill="none" stroke="#333" stroke-width="0.9"/><path d="M103.5 41L100.2 38V40H97.2Q93.7 40 93.7 43.5V46H95.4V44Q95.4 42.3 97.2 42.3H100.2V44.3Z" fill="none" stroke="#d0d0d0" stroke-width="0.9"/><path d="M129 12.5V7L131.5 4.5M133 12.5L135.5 10V4.5L137.5 4.5M129 7L133 12.5" stroke="#2a2a2a" fill="none" stroke-width="0.8"/><path d="M133.5 3L131.5 7.5H133.5L131.5 11L135.5 6.5H133.5L135 3Z" fill="#222"/><circle cx="129" cy="12.5" r="1" fill="#f0f0f0" stroke="#2a2a2a" stroke-width="0.7"/><circle cx="129" cy="7" r="1" fill="#f0f0f0" stroke="#2a2a2a" stroke-width="0.7"/><circle cx="131.5" cy="4.5" r="1" fill="#f0f0f0" stroke="#2a2a2a" stroke-width="0.7"/><circle cx="137.5" cy="4.5" r="1" fill="#f0f0f0" stroke="#2a2a2a" stroke-width="0.7"/><circle cx="137.5" cy="10" r="1" fill="#f0f0f0" stroke="#2a2a2a" stroke-width="0.7"/><circle cx="133" cy="12.5" r="1" fill="#f0f0f0" stroke="#2a2a2a" stroke-width="0.7"/><circle cx="135.5" cy="10" r="1" fill="#f0f0f0" stroke="#2a2a2a" stroke-width="0.7"/><rect x="129.3" y="22.5" width="8.4" height="5.2" stroke="#2a2a2a" fill="none" stroke-width="0.9"/><circle cx="129.3" cy="27.7" r="1.1" fill="#f0f0f0" stroke="#2a2a2a" stroke-width="0.7"/><circle cx="137.7" cy="22.5" r="1.1" fill="#f0f0f0" stroke="#2a2a2a" stroke-width="0.7"/><path d="M137.5 31.3L140.5 28.3V31.3Z" fill="#111"/><path d="M129.4 44.6L137.8 38.8" stroke="#2a2a2a" stroke-width="0.9"/><circle cx="129.4" cy="44.6" r="1.2" fill="#f0f0f0" stroke="#2a2a2a" stroke-width="0.7"/><circle cx="137.8" cy="38.8" r="1.2" fill="#f0f0f0" stroke="#2a2a2a" stroke-width="0.7"/><path d="M137.5 47.5L140.5 44.5V47.5Z" fill="#111"/><path d="M216.5 11.5A4.6 4.6 0 1 1 217.3 9" stroke="#2a2a2a" fill="none" stroke-width="0.9"/><circle cx="212.8" cy="8.5" r="1.1" fill="#333"/><path d="M216.8 14.8L219.8 11.8V14.8Z" fill="#111"/><path d="M208.5 28.5A5 5 0 0 1 217.5 24.5" stroke="#2a2a2a" fill="none" stroke-width="0.9"/><circle cx="213" cy="26" r="1.2" fill="#777"/><circle cx="208.5" cy="28.5" r="1.1" fill="#f0f0f0" stroke="#2a2a2a" stroke-width="0.7"/><circle cx="217.5" cy="24.5" r="1.1" fill="#f0f0f0" stroke="#2a2a2a" stroke-width="0.7"/><path d="M216.8 31.5L219.8 28.5V31.5Z" fill="#111"/><path d="M208 45L218 38" stroke="#2a2a2a" stroke-width="0.9"/><circle cx="213" cy="41.5" r="0.9" fill="#555"/><path d="M216.8 48L219.8 45V48Z" fill="#111"/><path d="M287 4.2H295.5L298.5 8V11" stroke="#2a2a2a" fill="none" stroke-width="0.9"/><path d="M297 14.5L300 11.5V14.5Z" fill="#111"/><path d="M287 20.8H293Q297.5 21 297.5 27" stroke="#2a2a2a" fill="none" stroke-width="0.9"/><path d="M296.5 31.5L299.5 28.5V31.5Z" fill="#111"/><rect x="287.5" y="37" width="5.5" height="5.5" fill="#9a9a9a" stroke="#333" stroke-width="0.8"/><rect x="292" y="41.2" width="6" height="5.8" fill="#aaa" stroke="#333" stroke-width="0.8"/><path d="M297 48L300 45V48Z" fill="#111"/><path d="M368 8.5H377.5M367.5 12L377 3.5" stroke="#2a2a2a" fill="none" stroke-width="0.85"/><path d="M377 14.8L380 11.8V14.8Z" fill="#111"/><rect x="368.3" y="21.2" width="5" height="5" stroke="#2a2a2a" fill="none" stroke-width="0.85"/><rect x="372.3" y="20.2" width="5.6" height="5" stroke="#2a2a2a" fill="none" stroke-width="0.85"/><path d="M369 29.5H374M373.3 25V29.5" stroke="#2a2a2a" fill="none" stroke-width="0.85"/><path d="M368.5 21.5L370.5 21.5L368.5 23.5Z" fill="#222"/><circle cx="368.5" cy="29.5" r="1" fill="#f0f0f0" stroke="#2a2a2a" stroke-width="0.7"/><path d="M377 32L380 29V32Z" fill="#111"/><rect x="373" y="37.2" width="4.4" height="2.6" stroke="#2a2a2a" fill="none" stroke-width="0.85"/><rect x="371" y="39" width="4" height="2.4" stroke="#2a2a2a" fill="none" stroke-width="0.85"/><rect x="367.6" y="43" width="4" height="3.6" stroke="#2a2a2a" fill="none" stroke-width="0.85"/><path d="M371.6 45H377.5" stroke="#2a2a2a" fill="none" stroke-width="0.85"/><path d="M377 48.3L380 45.3V48.3Z" fill="#111"/><path d="M447 6H457M447 11.5H458M447.5 5L456.5 12.5M458 3.5V12.5" stroke="#2a2a2a" fill="none" stroke-width="0.85"/><path d="M457 14.8L460 11.8V14.8Z" fill="#111"/><path d="M448 22.5H452.5M448 25.3H456M448 28.5H456M452.5 20.5V29M456 20.5V29.5" stroke="#2a2a2a" fill="none" stroke-width="0.85"/><circle cx="456.3" cy="30" r="0.9" fill="#f0f0f0" stroke="#2a2a2a" stroke-width="0.7"/><rect x="449" y="37.5" width="9" height="8" stroke="#2a2a2a" fill="none" stroke-width="0.85"/><path d="M451 44L456 39.5M453.5 39.5H456V42" stroke="#2a2a2a" fill="none" stroke-width="0.85"/><circle cx="448.7" cy="46" r="1" fill="#f0f0f0" stroke="#2a2a2a" stroke-width="0.7"/><path d="M527 14L537.5 3.5M530 6.5L532 9.5M529.5 8.5H533" stroke="#2a2a2a" fill="none" stroke-width="0.85"/><path d="M536.5 14.8L539.5 11.8V14.8Z" fill="#111"/><path d="M527.5 20.3H536.5L528 25M528 23.5V30.2H536.5L528 25.5" stroke="#2a2a2a" fill="none" stroke-width="0.85"/><path d="M536.5 30.2V25L529 30.2Z" fill="none" stroke="#2a2a2a" stroke-width="0.85"/><rect x="528.5" y="36" width="6.5" height="4.6" rx="1.8" stroke="#2a2a2a" fill="none" stroke-width="0.85"/><circle cx="531.5" cy="39" r="0.9" fill="#222"/><path d="M531 40.6V43M527 44H535.5M527 46.5H536.5M527 41V46.5" stroke="#2a2a2a" fill="none" stroke-width="0.85"/><path d="M536 48.3L539 45.3V48.3Z" fill="#111"/><g transform="translate(606.4 3.0999999999999996) scale(0.8)"><path d="M1 13V9H13V13M4 9L8 1L7 5H10L6 11" stroke="#222" fill="none" stroke-width="1.1"/></g><g transform="translate(623.4 3.0999999999999996) scale(0.8)"><circle cx="7" cy="7" r="5.5" stroke="#222" fill="none" stroke-width="1.1"/><path d="M3 11L11 3" stroke="#222" fill="none" stroke-width="1.1"/></g><g transform="translate(606.4 20.0) scale(0.8)"><path d="M1 13V1H13V13M1 1L4 4" stroke="#222" fill="none" stroke-width="1.1" stroke-width="1.1"/><path d="M11 14L14 11V14Z" fill="#111"/></g><g transform="translate(623.4 20.0) scale(0.8)"><path d="M1 3Q11 3 12 12M1 3L6 8" stroke="#222" fill="none" stroke-width="1.1"/><path d="M11 14L14 11V14Z" fill="#111"/></g><g transform="translate(606.4 36.300000000000004) scale(0.8)"><path d="M1 13V1H12" stroke="#222" fill="none" stroke-width="1.1" stroke-width="1.1"/></g><g transform="translate(623.4 36.300000000000004) scale(0.8)"><path d="M1 12H13L3 1ZM9 12A7 7 0 0 0 7 7" stroke="#222" fill="none" stroke-width="1.1"/><path d="M11 14L14 11V14Z" fill="#111"/></g><g transform="translate(641.4 3.0999999999999996) scale(0.8)"><path d="M1 13L6 1L12 13M1 13H3" stroke="#222" fill="none" stroke-width="1.1"/></g><g transform="translate(658.4 3.0999999999999996) scale(0.8)"><path d="M1 13L6 1M7 1H12M7 1V7H11M7 7V13H12" stroke="#222" fill="none" stroke-width="1.1"/></g><g transform="translate(675.4 3.0999999999999996) scale(0.8)"><path d="M1 4L7 12L13 4M0 13H14M5 6H10" stroke="#222" fill="none" stroke-width="1.1"/></g><g transform="translate(692.4 3.0999999999999996) scale(0.8)"><rect x="3" y="0.5" width="8" height="7" stroke="#222" fill="none" stroke-width="1.1"/><path d="M7 8V11M2 13H12" stroke="#222" fill="none" stroke-width="1.1"/><text x="4.5" y="6.5" font-size="6" fill="#222" font-family="Liberation Sans">A</text></g><g transform="translate(641.4 20.0) scale(0.8)"><text x="1" y="9" font-size="10" fill="#222" font-family="Liberation Sans">A</text><path d="M0 12H12" stroke="#222" fill="none" stroke-width="1.1"/></g><g transform="translate(658.4 20.0) scale(0.8)"><text x="1" y="9" font-size="10" fill="#222" font-family="Liberation Sans">A</text><path d="M0 12H9M11 2V11" stroke="#222" fill="none" stroke-width="1.1"/><path d="M11 14L14 11V14Z" fill="#111"/></g><g transform="translate(675.4 20.0) scale(0.8)"><circle cx="7" cy="8" r="5" stroke="#222" fill="none" stroke-width="1.1"/><path d="M4 8H10M7 5V11M10 3L13 1" stroke="#222" fill="none" stroke-width="1.1"/></g><g transform="translate(692.4 20.0) scale(0.8)"><path d="M2 13V1H12V7H2M5 1V7M8 1V7" stroke="#222" fill="none" stroke-width="1.1"/></g><g transform="translate(641.4 36.300000000000004) scale(0.8)"><text x="0" y="13" font-size="15" font-weight="bold" fill="#222" font-family="Liberation Serif">T</text></g><g transform="translate(658.4 36.300000000000004) scale(0.8)"><rect x="0.5" y="1.5" width="13" height="11" stroke="#222" fill="none" stroke-width="1.1"/><path d="M0.5 4.5H13.5M0.5 7.5H13.5M4.5 4.5V12.5M9 4.5V12.5" stroke="#222" fill="none" stroke-width="1.1"/></g><g transform="translate(675.4 36.300000000000004) scale(0.8)"><path d="M6 1L9 1L6 7H9L5 13L6 8H3Z" fill="#222"/><path d="M1 13H13" stroke="#222" fill="none" stroke-width="1.1"/></g><g transform="translate(692.4 36.300000000000004) scale(0.8)"><circle cx="7" cy="7" r="5" stroke="#222" fill="none" stroke-width="1.1"/><path d="M0 7H14M7 0V14" stroke="#222" fill="none" stroke-width="1.1"/><path d="M11 14L14 11V14Z" fill="#111"/></g><g transform="translate(711.4 3.0999999999999996) scale(0.8)"><path d="M1 4H13M3 2V13M11 2V13M1 13H13" stroke="#222" fill="none" stroke-width="1.1"/><circle cx="11" cy="3" r="1.5" stroke="#222" fill="none" stroke-width="1.1"/></g><g transform="translate(728.4 3.0999999999999996) scale(0.8)"><path d="M1 12L10 2M5 13L13 4" stroke="#222" fill="none" stroke-width="1.1"/></g><g transform="translate(745.4 3.0999999999999996) scale(0.8)"><path d="M6 1V13M0 13H13M6 9H9V13" stroke="#222" fill="none" stroke-width="1.1"/></g><g transform="translate(763.4 3.0999999999999996) scale(0.8)"><circle cx="6" cy="6" r="4.5" stroke="#222" fill="none" stroke-width="1.1"/><path d="M2 13L13 3" stroke="#222" fill="none" stroke-width="1.1"/></g><g transform="translate(711.4 20.0) scale(0.8)"><path d="M1 13L13 1" stroke="#222" fill="none" stroke-width="1.1" stroke-width="1.1"/></g><g transform="translate(728.4 20.0) scale(0.8)"><path d="M1 13H13M1 13L12 5M1 10L10 2" stroke="#222" fill="none" stroke-width="1.1"/></g><g transform="translate(745.4 20.0) scale(0.8)"><path d="M7 2L1 11H13Z" fill="#222"/><path d="M7 0V3" stroke="#222" fill="none" stroke-width="1.1"/><path d="M11 14L14 11V14Z" fill="#111"/></g><g transform="translate(763.4 20.0) scale(0.8)"><circle cx="7" cy="7" r="6" stroke="#222" fill="none" stroke-width="1.1"/><circle cx="7" cy="7" r="3.5" stroke="#222" fill="none" stroke-width="1.1"/></g><g transform="translate(711.4 36.300000000000004) scale(0.8)"><path d="M1 1L4 13M12 1L9 13" stroke="#222" fill="none" stroke-width="1.1" stroke-width="1.1"/><circle cx="4" cy="12" r="1" fill="#222"/><path d="M11 14L14 11V14Z" fill="#111"/></g><g transform="translate(728.4 36.300000000000004) scale(0.8)"><path d="M2 5H12M2 9H12" stroke="#222" stroke-width="1.6"/></g><g transform="translate(745.4 36.300000000000004) scale(0.8)"><path d="M1 1V13H12Z" stroke="#222" fill="none" stroke-width="1.1"/><path d="M1 8A5 5 0 0 1 6 13" stroke="#222" fill="none" stroke-width="1.1"/></g><g transform="translate(763.4 36.300000000000004) scale(0.8)"><circle cx="7" cy="7" r="6" stroke="#222" fill="none" stroke-width="1.1"/><path d="M3 11L11 3M5 12L12 5" stroke="#222" fill="none" stroke-width="1.1"/><path d="M11 14L14 11V14Z" fill="#111"/></g><g transform="translate(780.4 3.0999999999999996) scale(0.8)"><circle cx="2" cy="12" r="1.2" stroke="#222" fill="none" stroke-width="1.1"/><circle cx="12" cy="2" r="1.2" stroke="#222" fill="none" stroke-width="1.1"/><path d="M4 10L10 4" stroke="#222" fill="none" stroke-width="1.1" stroke-dasharray="1.5 1"/><text x="5" y="8" font-size="7" fill="#222" font-family="Liberation Sans">?</text></g><g transform="translate(797.4 3.0999999999999996) scale(0.8)"><path d="M1 1V12L12 12" stroke="#222" fill="none" stroke-width="1.1"/><text x="7" y="8" font-size="8" fill="#222" font-family="Liberation Sans">?</text></g><g transform="translate(780.4 20.0) scale(0.8)"><path d="M1 12H13L7 4Z" stroke="#222" fill="none" stroke-width="1.1"/><text x="4" y="8" font-size="8" fill="#222" font-family="Liberation Sans">?</text></g><g transform="translate(797.4 20.0) scale(0.8)"><path d="M1 1V13H13V7H7V1Z" stroke="#222" fill="none" stroke-width="1.1"/><text x="8" y="7" font-size="8" fill="#222" font-family="Liberation Sans">?</text></g><g transform="translate(780.4 36.300000000000004) scale(0.8)"><rect x="1" y="2" width="7" height="11" fill="#555" stroke="#222"/><path d="M8 13H13" stroke="#222" fill="none" stroke-width="1.1"/><text x="7" y="8" font-size="8" fill="#222" font-family="Liberation Sans">?</text></g><g transform="translate(797.4 36.300000000000004) scale(0.8)"><path d="M1 1V13H13" stroke="#222" fill="none" stroke-width="1.1"/><text x="6" y="8" font-size="8" fill="#222" font-family="Liberation Sans">?</text><rect x="3" y="8" width="3" height="3" fill="#222"/></g><g transform="translate(816 2.7) scale(0.82)"><rect x="0.5" y="0.5" width="12" height="12" stroke="#222" fill="none" stroke-width="1"/><path d="M3 3V9H8M3 9L6 6" stroke="#222" fill="none" stroke-width="1"/></g><g transform="translate(816 19.7) scale(0.82)"><rect x="0.5" y="1.5" width="12" height="11" stroke="#222" fill="none" stroke-width="1"/><rect x="2.5" y="4" width="5" height="3" stroke="#222" fill="none" stroke-width="1"/><rect x="6.5" y="8" width="5" height="3" stroke="#222" fill="none" stroke-width="1"/><path d="M0.5 4H12.5" stroke="#222" fill="none" stroke-width="1"/></g><g transform="translate(816 36.7) scale(0.82)"><path d="M6.5 0V6M4 3H9M0.5 7.5H12.5V12.5H0.5ZM0.5 10H12.5" stroke="#222" fill="none" stroke-width="1"/></g><g transform="translate(896.2 2.7) scale(0.82)"><rect x="0.5" y="0.5" width="12" height="12" stroke="#222" fill="none" stroke-width="1"/><path d="M0.5 4.5H12.5M0.5 8.5H12.5M6 0.5V12.5" stroke="#222" fill="none" stroke-width="1"/><rect x="2" y="2" width="3" height="2" fill="#222"/><rect x="2" y="9.5" width="8" height="2" fill="#222"/></g><g transform="translate(896.2 19.7) scale(0.82)"><rect x="0.5" y="1" width="12" height="5" stroke="#222" fill="none" stroke-width="1"/><rect x="0.5" y="8" width="12" height="5" stroke="#222" fill="none" stroke-width="1"/><rect x="3" y="2.5" width="7" height="2" stroke="#222" fill="none" stroke-width="1"/></g><g transform="translate(896.2 36.7) scale(0.82)"><path d="M1 3H4M1 11H4M3 1V13" stroke="#222" fill="none" stroke-width="1"/><rect x="6.5" y="2.5" width="6" height="9" stroke="#222" fill="none" stroke-width="1"/></g><g transform="translate(976.4 3.0999999999999996) scale(0.8)"><circle cx="5" cy="9" r="4" stroke="#222" fill="none" stroke-width="1.1"/><rect x="6" y="1" width="7" height="7" stroke="#222" fill="none" stroke-width="1.1"/><path d="M1 6L5 1L8 6" stroke="#222" fill="none" stroke-width="1.1"/></g><g transform="translate(992.4 3.0999999999999996) scale(0.8)"><rect x="2" y="2" width="11" height="10" stroke="#222" fill="none" stroke-width="1.1"/></g><g transform="translate(976.4 20.0) scale(0.8)"><rect x="0.5" y="0.5" width="13" height="12" stroke="#222" fill="none" stroke-width="1.1"/><path d="M1 12L5 6L9 10L13 8V12Z" fill="#222"/><circle cx="10" cy="3.5" r="1.3" fill="#222"/></g><g transform="translate(992.4 20.0) scale(0.8)"><path d="M1 3H9L13 7V13H1Z" stroke="#222" fill="none" stroke-width="1.1"/></g><g transform="translate(976.4 36.300000000000004) scale(0.8)"><rect x="0.5" y="2" width="12" height="10" stroke="#222" fill="none" stroke-width="1.1"/><path d="M3 9H8M10 1V4" stroke="#222" fill="none" stroke-width="1.1"/></g><g transform="translate(992.4 36.300000000000004) scale(0.8)"><path d="M2 13L6 1M6 6H13" stroke="#222" fill="none" stroke-width="1.1"/></g></svg>
<div class="a" style="left:0px;top:62px;width:10px;height:590px;background:#c8c8c8;"></div>
<div class="a" style="left:0px;top:62px;width:10px;height:16.5px;background:#3b3b3b;"></div>
<div class="a" style="left:0px;top:78.5px;width:10px;height:66.5px;background:#f5f5f5;"></div>
<div class="a" style="left:9px;top:62px;width:1px;height:590px;background:#8c8c8c;"></div>
<div class="a" style="left:10px;top:62px;width:206px;height:590px;background:#f0f0f0;"></div>
<div class="a" style="left:215px;top:62px;width:1px;height:590px;background:#9c9c9c;"></div>
<div class="a" style="left:10px;top:62px;width:205px;height:11px;background:#d2d2d2;"></div>
<div class="t" style="left:12px;top:64px;font-size:8px;line-height:8px;color:#4a4a4a;">Дерево чертежа</div>
<div class="a" style="left:10px;top:73px;width:205px;height:17.5px;background:#f0f0f0;"></div>
<div class="a" style="left:10px;top:90px;width:205px;height:1px;background:#b4b4b4;"></div>
<div class="a" style="left:10px;top:91px;width:205px;height:14px;background:#ffffff;"></div>
<div class="a" style="left:112px;top:91px;width:1.5px;height:14px;background:#d6d6d6;"></div>
<div class="a" style="left:12px;top:92px;width:14.5px;height:10.5px;background:#000;"></div>
<div class="t" style="left:16px;top:93.5px;font-size:8.5px;line-height:8.5px;color:#fff;">5</div>
<div class="t" style="left:28px;top:94px;font-size:8px;line-height:8px;color:#262626;">Выносной элем...</div>
<div class="a" style="left:116px;top:92px;width:14.5px;height:10.5px;background:#000;"></div>
<div class="t" style="left:120px;top:93.5px;font-size:8.5px;line-height:8.5px;color:#fff;">0</div>
<div class="t" style="left:132px;top:94px;font-size:8px;line-height:8px;color:#262626;">Системный слой</div>
<div class="a" style="left:10px;top:104.8px;width:205px;height:1px;background:#9a9a9a;"></div>
<div class="a" style="left:10px;top:105.8px;width:205px;height:17.3px;background:#f3f3f3;"></div>
<div class="a" style="left:27px;top:106px;width:188px;height:17px;background:#fafafa;"></div>
<div class="t" style="left:44px;top:110.5px;font-size:8px;line-height:8px;color:#a9a9a9;">Поиск (Ctrl+/)</div>
<div class="a" style="left:10px;top:123px;width:205px;height:1px;background:#6e6e6e;"></div>
<div class="a" style="left:10px;top:124px;width:205px;height:34.5px;background:#e9e9e9;"></div>
<div class="a" style="left:96px;top:124px;width:119px;height:34.5px;background:#efefef;"></div>
<div class="a" style="left:10px;top:158px;width:205px;height:1.2px;background:#8e8e8e;"></div>
<div class="a" style="left:10px;top:159.0px;width:205px;height:17.25px;background:#efefef;"></div>
<div class="a" style="left:10px;top:159.0px;width:86px;height:17.25px;background:#e7e7e7;"></div>
<div class="a" style="left:62px;top:159.6px;width:16.8px;height:16.4px;background:#050505;"></div>
<div class="a" style="left:10px;top:175.8px;width:205px;height:0.8px;background:#f6f6f6;"></div>
<div class="t" style="left:68.4px;top:164.2px;font-size:7px;line-height:7px;color:#e8e8e8;">0</div>
<div class="t" style="left:124px;top:163.8px;font-size:8px;line-height:8px;color:#2a2a2a;;width:91px;overflow:hidden">Системный вид (1:1)</div>
<div class="a" style="left:10px;top:176.25px;width:205px;height:17.25px;background:#efefef;"></div>
<div class="a" style="left:10px;top:176.25px;width:86px;height:17.25px;background:#e7e7e7;"></div>
<div class="a" style="left:62px;top:176.85px;width:16.8px;height:16.4px;background:#050505;"></div>
<div class="a" style="left:10px;top:193.05px;width:205px;height:0.8px;background:#f6f6f6;"></div>
<div class="t" style="left:68.4px;top:181.45px;font-size:7px;line-height:7px;color:#e8e8e8;">1</div>
<div class="t" style="left:124px;top:181.05px;font-size:8px;line-height:8px;color:#2a2a2a;;width:91px;overflow:hidden">Вид 1 (1.5:1)</div>
<div class="a" style="left:10px;top:193.5px;width:205px;height:17.25px;background:#efefef;"></div>
<div class="a" style="left:10px;top:193.5px;width:86px;height:17.25px;background:#e7e7e7;"></div>
<div class="a" style="left:62px;top:194.1px;width:16.8px;height:16.4px;background:#050505;"></div>
<div class="a" style="left:10px;top:210.3px;width:205px;height:0.8px;background:#f6f6f6;"></div>
<div class="t" style="left:68.4px;top:198.7px;font-size:7px;line-height:7px;color:#e8e8e8;">2</div>
<div class="t" style="left:124px;top:198.3px;font-size:8px;line-height:8px;color:#2a2a2a;;width:91px;overflow:hidden">Проекционный вид 2 (1.5:1)</div>
<div class="a" style="left:10px;top:210.75px;width:205px;height:17.25px;background:#efefef;"></div>
<div class="a" style="left:10px;top:210.75px;width:86px;height:17.25px;background:#e7e7e7;"></div>
<div class="a" style="left:62px;top:211.35px;width:16.8px;height:16.4px;background:#050505;"></div>
<div class="a" style="left:10px;top:227.55px;width:205px;height:0.8px;background:#f6f6f6;"></div>
<div class="t" style="left:68.4px;top:215.95px;font-size:7px;line-height:7px;color:#e8e8e8;">3</div>
<div class="t" style="left:124px;top:215.55px;font-size:8px;line-height:8px;color:#2a2a2a;;width:91px;overflow:hidden">Разрез 3 (1.5:1)</div>
<div class="a" style="left:10px;top:228.0px;width:205px;height:17.25px;background:#efefef;"></div>
<div class="a" style="left:10px;top:228.0px;width:86px;height:17.25px;background:#e7e7e7;"></div>
<div class="a" style="left:62px;top:228.6px;width:16.8px;height:16.4px;background:#050505;"></div>
<div class="a" style="left:10px;top:244.8px;width:205px;height:0.8px;background:#f6f6f6;"></div>
<div class="t" style="left:68.4px;top:233.2px;font-size:7px;line-height:7px;color:#e8e8e8;">4</div>
<div class="t" style="left:124px;top:232.8px;font-size:8px;line-height:8px;color:#2a2a2a;font-style:italic;width:91px;overflow:hidden">Разрез В-В (1.5:1)</div>
<div class="a" style="left:10px;top:245.25px;width:205px;height:17.25px;background:#efefef;"></div>
<div class="a" style="left:10px;top:245.25px;width:86px;height:17.25px;background:#e7e7e7;"></div>
<div class="a" style="left:62px;top:245.85px;width:16.8px;height:16.4px;background:#050505;"></div>
<div class="a" style="left:10px;top:262.05px;width:205px;height:0.8px;background:#f6f6f6;"></div>
<div class="t" style="left:68.4px;top:250.45px;font-size:7px;line-height:7px;color:#e8e8e8;">5</div>
<div class="t" style="left:124px;top:250.05px;font-size:8px;line-height:8px;color:#2a2a2a;font-style:italic;font-weight:bold;width:91px;overflow:hidden">● Выносной элемент А (4:1)</div>
<div class="t" style="left:124px;top:129.5px;font-size:8px;line-height:8px;color:#2a2a2a;">Корпус</div>
<div class="t" style="left:124px;top:147px;font-size:8px;line-height:8px;color:#2a2a2a;">Листы</div>
<div class="a" style="left:10px;top:510.5px;width:205px;height:1.4px;background:#6e6e6e;"></div>
<div class="t" style="left:0px;top:95px;font-size:8px;line-height:8px;color:#444;">r</div>
<div class="t" style="left:1px;top:101.5px;font-size:8px;line-height:8px;color:#444;">x</div>
<div class="t" style="left:0px;top:129px;font-size:6px;line-height:6px;color:#333;"><span style="font-size:6px">⊤1</span></div>
<div class="t" style="left:0px;top:135px;font-size:7px;line-height:7px;color:#333;">+2</div>
<svg class="a" style="left:0;top:0" width="1000" height="652" viewBox="0 0 1000 652"><g transform="translate(210 67.5)"><circle r="3.2" fill="none" stroke="#333" stroke-width="1.6" stroke-dasharray="1.6 0.9"/><circle r="2" fill="none" stroke="#333" stroke-width="1.1"/></g><g transform="translate(12 75)"><rect x="0.5" y="2.5" width="11" height="7" stroke="#2a2a2a" fill="none" stroke-width="1"/><rect x="7" y="6.5" width="4" height="3" fill="#2a2a2a"/></g><g transform="translate(29.5 75)"><rect x="0.5" y="0.5" width="11" height="11" stroke="#2a2a2a" fill="none" stroke-width="1"/><path d="M3 3V8H7" stroke="#2a2a2a" fill="none" stroke-width="1"/><circle cx="7.5" cy="8" r="1.3" fill="#222"/></g><g transform="translate(46.5 75)"><path d="M0 10L4 4H12L8 10Z" fill="#2a2a2a"/></g><g transform="translate(64.5 75)"><circle cx="5" cy="8" r="3.5" stroke="#2a2a2a" fill="none" stroke-width="1"/><rect x="5" y="0.5" width="6.5" height="6" stroke="#2a2a2a" fill="none" stroke-width="1"/><path d="M1 5L4 0.5L7 5" stroke="#2a2a2a" fill="none" stroke-width="1"/></g><g transform="translate(81.5 75)"><rect x="0.5" y="0.5" width="11" height="11" stroke="#2a2a2a" fill="none" stroke-width="1"/><path d="M1 11L5 5L8 8L11 6V11Z" fill="#2a2a2a"/><circle cx="8.5" cy="3" r="1.2" fill="#222"/></g><g transform="translate(98.5 75)"><rect x="0.5" y="1.5" width="11" height="10" stroke="#2a2a2a" fill="none" stroke-width="1"/><path d="M3 8H7M9 0V3" stroke="#2a2a2a" fill="none" stroke-width="1"/></g><path d="M101 96H107L104 99.5Z" fill="#222"/><path d="M205 96H211L208 99.5Z" fill="#222"/><path d="M13 110H24L20 115V121L17 118.5V115Z" fill="#2a2a2a"/><g transform="translate(33 110)"><circle cx="5" cy="4" r="3" fill="none" stroke="#aaa" stroke-width="1.1"/><path d="M3 6.5L0.5 9.5" stroke="#aaa" stroke-width="1.3"/></g><g transform="translate(18.5 167.5)"><path d="M-5 0Q0 -5 5 0Q0 5 -5 0Z" fill="none" stroke="#2a2a2a" stroke-width="1.1"/><circle r="1.8" fill="#2a2a2a"/></g><g transform="translate(36.5 167.5)"><path d="M-4 -1V-3.5Q-4 -5.5 -2 -5.5Q0 -5.5 0 -3.5V-1.5" fill="none" stroke="#2a2a2a" stroke-width="0.9"/><rect x="-2" y="-1.5" width="6.5" height="5" fill="#2a2a2a"/><rect x="0.7" y="0.4" width="1.3" height="1.3" fill="#ddd"/></g><path d="M104.5 165.5L108 167.5L104.5 169.5Z" fill="#333"/><g transform="translate(112 161.5)"><rect x="0.5" y="0.5" width="10" height="11" fill="none" stroke="#333" stroke-width="0.9"/><path d="M0 8V11H3" stroke="#333" fill="none" stroke-width="0.9"/></g><g transform="translate(18.5 184.75)"><path d="M-5 0Q0 -5 5 0Q0 5 -5 0Z" fill="none" stroke="#2a2a2a" stroke-width="1.1"/><circle r="1.8" fill="#2a2a2a"/></g><g transform="translate(36.5 184.75)"><path d="M-4 -1V-3.5Q-4 -5.5 -2 -5.5Q0 -5.5 0 -3.5V-1.5" fill="none" stroke="#2a2a2a" stroke-width="0.9"/><rect x="-2" y="-1.5" width="6.5" height="5" fill="#2a2a2a"/><rect x="0.7" y="0.4" width="1.3" height="1.3" fill="#ddd"/></g><path d="M104.5 182.75L108 184.75L104.5 186.75Z" fill="#333"/><g transform="translate(112 178.75)"><rect x="0.5" y="0.5" width="10" height="11" fill="none" stroke="#333" stroke-width="0.9"/><path d="M1 11L10 2V11Z" fill="#222"/><path d="M2 2H5V5" stroke="#333" fill="none"/></g><g transform="translate(18.5 202.0)"><path d="M-5 0Q0 -5 5 0Q0 5 -5 0Z" fill="none" stroke="#2a2a2a" stroke-width="1.1"/><circle r="1.8" fill="#2a2a2a"/></g><g transform="translate(36.5 202.0)"><path d="M-4 -1V-3.5Q-4 -5.5 -2 -5.5Q0 -5.5 0 -3.5V-1.5" fill="none" stroke="#2a2a2a" stroke-width="0.9"/><rect x="-2" y="-1.5" width="6.5" height="5" fill="#2a2a2a"/><rect x="0.7" y="0.4" width="1.3" height="1.3" fill="#ddd"/></g><path d="M104.5 200.0L108 202.0L104.5 204.0Z" fill="#333"/><g transform="translate(112 196.0)"><rect x="0.5" y="0.5" width="10" height="11" fill="none" stroke="#333" stroke-width="0.9"/><path d="M1 11L10 2V11Z" fill="#222"/><path d="M2 2H5V5" stroke="#333" fill="none"/></g><g transform="translate(18.5 219.25)"><path d="M-5 0Q0 -5 5 0Q0 5 -5 0Z" fill="none" stroke="#2a2a2a" stroke-width="1.1"/><circle r="1.8" fill="#2a2a2a"/></g><g transform="translate(36.5 219.25)"><path d="M-4 -1V-3.5Q-4 -5.5 -2 -5.5Q0 -5.5 0 -3.5V-1.5" fill="none" stroke="#2a2a2a" stroke-width="0.9"/><rect x="-2" y="-1.5" width="6.5" height="5" fill="#2a2a2a"/><rect x="0.7" y="0.4" width="1.3" height="1.3" fill="#ddd"/></g><path d="M104.5 217.25L108 219.25L104.5 221.25Z" fill="#333"/><g transform="translate(112 213.25)"><rect x="0.5" y="0.5" width="10" height="11" fill="none" stroke="#333" stroke-width="0.9"/><path d="M3 3V8H7M3 8L5 6" stroke="#333" fill="none" stroke-width="0.9"/></g><g transform="translate(18.5 236.5)"><path d="M-5 0Q0 -5 5 0Q0 5 -5 0Z" fill="none" stroke="#2a2a2a" stroke-width="1.1"/><circle r="1.8" fill="#2a2a2a"/></g><g transform="translate(36.5 236.5)"><path d="M-4 -1V-3.5Q-4 -5.5 -2 -5.5Q0 -5.5 0 -3.5V-1.5" fill="none" stroke="#2a2a2a" stroke-width="0.9"/><rect x="-2" y="-1.5" width="6.5" height="5" fill="#2a2a2a"/><rect x="0.7" y="0.4" width="1.3" height="1.3" fill="#ddd"/></g><path d="M104.5 234.5L108 236.5L104.5 238.5Z" fill="#333"/><g transform="translate(112 230.5)"><rect x="0.5" y="0.5" width="10" height="11" fill="none" stroke="#333" stroke-width="0.9"/><path d="M3 3V8H7M3 8L5 6" stroke="#333" fill="none" stroke-width="0.9"/></g><path d="M70.4 257.85L72 259.45L70.4 261.05L68.8 259.45Z" fill="#fff"/><g transform="translate(18.5 253.75)"><path d="M-5 0Q0 -5 5 0Q0 5 -5 0Z" fill="none" stroke="#2a2a2a" stroke-width="1.1"/><circle r="1.8" fill="#2a2a2a"/></g><g transform="translate(36.5 253.75)"><path d="M-4 -1V-3.5Q-4 -5.5 -2 -5.5Q0 -5.5 0 -3.5V-1.5" fill="none" stroke="#2a2a2a" stroke-width="0.9"/><rect x="-2" y="-1.5" width="6.5" height="5" fill="#2a2a2a"/><rect x="0.7" y="0.4" width="1.3" height="1.3" fill="#ddd"/></g><path d="M104.5 251.75L108 253.75L104.5 255.75Z" fill="#333"/><g transform="translate(112 247.75)"><rect x="0.5" y="0.5" width="10" height="11" fill="none" stroke="#333" stroke-width="0.9"/><path d="M1 11L10 2V11Z" fill="#222"/><path d="M2 2H5V5" stroke="#333" fill="none"/></g><g transform="translate(112 127.5)"><rect x="0.5" y="0.5" width="10" height="10" fill="none" stroke="#333" stroke-width="0.9"/><rect x="6" y="1.5" width="3" height="8" fill="none" stroke="#333" stroke-width="0.9"/><path d="M2 4H5M2 6H4" stroke="#333"/></g><g transform="translate(112 145)"><path d="M0 1H4L5 2.5H11V11H0Z" fill="#2a2a2a"/><rect x="5" y="6" width="4" height="3" fill="#eee"/></g><path d="M104.5 148.5L108 150.5L104.5 152.5Z" fill="#333"/><g transform="translate(0 64)"><path d="M0 3H4M0 6H4M0 9H4" stroke="#eee" stroke-width="1.2"/></g><g transform="translate(0 83)"><rect x="-2" y="0.5" width="6" height="9" fill="none" stroke="#444"/><path d="M0 3H3M0 6H3" stroke="#444"/></g><g transform="translate(0 114)"><path d="M0 1H5M0 4.5H5M0 8H5" stroke="#222" stroke-width="1.7"/></g></svg>
<div class="a" style="left:517.5px;top:62px;width:446.5px;height:17.5px;background:#ececec;border:1px solid #b2b2b2;border-top:none"></div>
<div class="a" style="left:518px;top:62.5px;width:9.6px;height:17px;background:#e6e6e6;"></div>
<div class="a" style="left:528px;top:62.5px;width:31px;height:17px;background:#3c3c3c;"></div>
<div class="a" style="left:561px;top:62.5px;width:16.5px;height:17px;background:#3c3c3c;"></div>
<div class="a" style="left:706px;top:62.5px;width:16.5px;height:17px;background:#3c3c3c;"></div>
<div class="a" style="left:634px;top:63px;width:53px;height:16px;background:#f8f8f8;"></div>
<div class="a" style="left:722.5px;top:63px;width:60px;height:16px;background:#f8f8f8;"></div>
<div class="a" style="left:806px;top:63px;width:44px;height:16px;background:#f8f8f8;"></div>
<div class="a" style="left:857.5px;top:63px;width:29.5px;height:16px;background:#f8f8f8;"></div>
<div class="a" style="left:897px;top:63px;width:31px;height:16px;background:#f8f8f8;"></div>
<div class="a" style="left:850px;top:63px;width:7.5px;height:16px;background:#dcdcdc;"></div>
<div class="a" style="left:887px;top:63px;width:10px;height:16px;background:#dcdcdc;"></div>
<div class="a" style="left:615px;top:63px;width:1px;height:16px;background:#c8c8c8;"></div>
<div class="t" style="left:647px;top:66.5px;font-size:8.6px;line-height:8.6px;color:#2a2a2a;letter-spacing:0.6px">СК 0</div>
<div class="t" style="left:738.5px;top:66.5px;font-size:8.6px;line-height:8.6px;color:#2a2a2a;">1</div>
<div class="t" style="left:780px;top:65px;font-size:5px;line-height:5px;color:#333;"><span style="font-size:5px">1</span></div>
<div class="t" style="left:817px;top:66.5px;font-size:8.6px;line-height:8.6px;color:#3a3a3a;width:17px;overflow:hidden">0.674</div>
<div class="t" style="left:851.5px;top:66.5px;font-size:8.6px;line-height:8.6px;color:#555;">X</div>
<div class="t" style="left:859.5px;top:66.5px;font-size:8.6px;line-height:8.6px;color:#3a3a3a;width:28px;overflow:hidden">17.1739</div>
<div class="t" style="left:889.5px;top:66.5px;font-size:8.6px;line-height:8.6px;color:#555;">Y</div>
<div class="t" style="left:898.5px;top:66.5px;font-size:8.6px;line-height:8.6px;color:#3a3a3a;width:28px;overflow:hidden">80.9987</div>
<svg class="a" style="left:0;top:0" width="1000" height="652" viewBox="0 0 1000 652"><path d="M519.5 65.5H526M519.5 67.5H526" stroke="#999" stroke-width="0.9"/><path d="M532.5 76.5L539.5 69.5A2.6 2.6 0 0 1 543.2 73.2L536.2 80.2" transform="translate(0 -3)" fill="none" stroke="#e8e8e8" stroke-width="3.2"/><path d="M532.5 76.5L539.5 69.5A2.6 2.6 0 0 1 543.2 73.2L536.2 80.2" transform="translate(0 -3)" fill="none" stroke="#3c3c3c" stroke-width="1.2"/><path d="M549 69.5H555L552 73Z" fill="#eee"/><path d="M563 76L572 67M566 76L575 67M570 75.5H576M573 71V76" stroke="#ddd" stroke-width="1"/><g transform="translate(587 71)"><path d="M-5 0Q0 -4 5 0Q0 4 -5 0Z" fill="none" stroke="#333"/><circle r="1.2" fill="#333"/><path d="M-4 6L3 1M-1 6H4" stroke="#333"/></g><g transform="translate(607 71)"><path d="M-3 -1Q1 -4 5 -1Q1 2 -3 -1Z" fill="none" stroke="#333"/><circle cx="1" cy="-1" r="1" fill="#333"/><path d="M-3 1V6H3" stroke="#333" fill="none"/></g><path d="M622 66V77M625.5 66V77M628.5 66V77M620 68.5H630M620 71.5H630M620 74.5H630" stroke="#333" stroke-width="0.9"/><path d="M637 67V76H645" stroke="#333" fill="none" stroke-width="0.9"/><path d="M635.5 68L637 65.5L638.5 68Z M644 74.5L646.5 76L644 77.5Z" fill="#333"/><circle cx="637" cy="76.2" r="1.3" fill="#f8f8f8" stroke="#333" stroke-width="0.8"/><path d="M678 69.5H684L681 73Z" fill="#222"/><path d="M691 76H696V67H700" stroke="#333" fill="none"/><g stroke="#eee" fill="none" stroke-width="0.9"><path d="M709.5 75L719.5 67"/><circle cx="711.5" cy="68.5" r="1.3"/><circle cx="717.5" cy="74.5" r="1.3"/></g><path d="M726.5 67V76.5H734.5V67" stroke="#333" fill="none" stroke-width="0.9"/><path d="M725 68L726.5 65.5L728 68Z M733 68L734.5 65.5L736 68Z" fill="#333"/><circle cx="726.5" cy="76.5" r="1" fill="#333"/><circle cx="734.5" cy="76.5" r="1" fill="#333"/><path d="M761 69.5H767L764 73Z" fill="#222"/><g transform="translate(776 70)"><circle r="3.3" fill="none" stroke="#333"/><path d="M2.5 2.5L5 5" stroke="#333" stroke-width="1.4"/></g><path d="M791 69.5H797L794 73Z" fill="#222"/><g transform="translate(807 70)"><circle r="3.3" fill="none" stroke="#333"/><path d="M2.5 2.5L5 5" stroke="#333" stroke-width="1.4"/><path d="M-2 0H2M0 -2V2" stroke="#333"/></g><path d="M839 69.5H845L842 73Z" fill="#222"/><path d="M930.5 66.5H940M931 66.5V77.5M934.5 66.5V77.5M939.5 66.5V77.5M931 69H940" stroke="#333" fill="none" stroke-width="0.9"/><rect x="931" y="74.5" width="3" height="3" fill="none" stroke="#333" stroke-width="0.8"/><path d="M937 70V77" stroke="#333" stroke-width="1.2"/><path d="M949 77L956 70M955 67L958 70M954 68L958 64L960 66L956 70Z" stroke="#333" fill="#333" stroke-width="1"/></svg>
</body></html>
